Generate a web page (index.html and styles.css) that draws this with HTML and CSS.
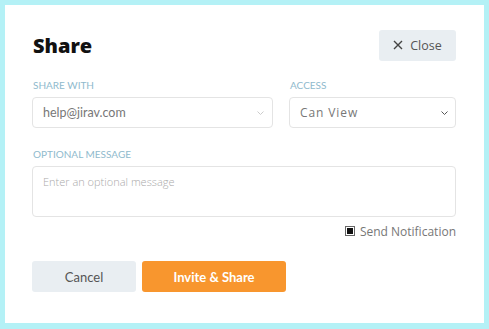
FILE: index.html
```html
<!DOCTYPE html>
<html lang="en">
<head>
    <meta charset="UTF-8">
    <title>Share</title>
    <link rel="stylesheet" href="styles.css">
</head>
<body>

<div class="modal">
    <div class="modal-header">
        <h2>Share</h2>
        <button type="button" class="btn-close">
            <svg width="10" height="10" viewBox="0 0 10 10"><path d="M1 1L9 9M9 1L1 9" stroke="#444" stroke-width="1.4" fill="none"/></svg>
            Close
        </button>
    </div>

    <div class="form-row">
        <div class="form-group group-email">
            <label>Share With</label>
            <div class="select select-email">
                <span>help@jirav.com</span>
                <svg width="7" height="4" viewBox="0 0 7 4"><path d="M0.5 0.5L3.5 3.5L6.5 0.5" stroke="#ccc" fill="none"/></svg>
            </div>
        </div>
        <div class="form-group group-access">
            <label>Access</label>
            <div class="select select-access">
                <span>Can View</span>
                <svg width="7" height="4" viewBox="0 0 7 4"><path d="M0.5 0.5L3.5 3.5L6.5 0.5" stroke="#555" fill="none"/></svg>
            </div>
        </div>
    </div>

    <div class="form-group group-message">
        <label>Optional Message</label>
        <div class="textarea">Enter an optional message</div>
    </div>

    <div class="notify">
        <span class="checkbox"></span>
        Send Notification
    </div>

    <div class="button-group">
        <button type="button" class="btn-cancel">Cancel</button>
        <button type="button" class="btn-invite">Invite &amp; Share</button>
    </div>
</div>

</body>
</html>
```

FILE: styles.css
```css
body {
    margin: 0;
    padding: 5px 5px 6px;
    background: #b4f1f6;
    font-family: 'Lato', 'Open Sans', sans-serif;
}
.modal {
    background: #fff;
    height: 318px;
    box-sizing: border-box;
    padding: 25px 28px 0 27px;
}
.modal-header {
    display: flex;
    justify-content: space-between;
    align-items: center;
    height: 31px;
}
h2 {
    margin: 0 0 0 1px;
    font-family: 'Open Sans', sans-serif;
    font-size: 20px;
    font-weight: 800;
    color: #111;
}
button {
    border: none;
    border-radius: 3px;
    cursor: pointer;
    height: 31px;
}
.btn-close {
    width: 77px;
    background: #e9eef2;
    color: #555;
    font-family: 'Open Sans', sans-serif;
    font-size: 12.5px;
    display: flex;
    align-items: center;
    justify-content: center;
    gap: 7px;
    padding: 0 0 1px;
}
.form-row {
    display: flex;
    gap: 16px;
    margin-top: 18px;
}
.group-email {
    width: 241px;
}
.group-access {
    flex: 1;
}
label {
    display: block;
    font-size: 10px;
    line-height: 12px;
    text-transform: uppercase;
    color: #8fbacd;
    margin: 0 0 6px 1px;
}
.select {
    height: 31px;
    box-sizing: border-box;
    border: 1px solid #e4e4e4;
    border-radius: 4px;
    display: flex;
    align-items: center;
    justify-content: space-between;
    padding: 0 7px 0 10px;
    color: #777;
}
.select-email span {
    font-size: 12.5px;
}
.select-email {
    padding-right: 8px;
}
.select-access span {
    font-family: 'Open Sans', sans-serif;
    font-size: 12px;
    letter-spacing: 0.9px;
}
.group-message {
    margin-top: 20px;
}
.textarea {
    height: 51px;
    box-sizing: border-box;
    border: 1px solid #e4e4e4;
    border-radius: 4px;
    padding: 7px 10px;
    font-family: 'Open Sans', sans-serif;
    font-size: 11px;
    font-weight: 300;
    color: #aaa;
}
.notify {
    display: flex;
    justify-content: flex-end;
    align-items: center;
    gap: 5px;
    margin-top: 7px;
    height: 14px;
    font-family: 'Open Sans', sans-serif;
    font-size: 12px;
    color: #777;
}
.checkbox {
    width: 6px;
    height: 6px;
    border: 1px solid #666;
    padding: 1px;
    background: #111;
    background-clip: content-box;
}
.button-group {
    display: flex;
    gap: 6px;
    margin-top: 23px;
}
.btn-cancel {
    width: 104px;
    background: #e9eef2;
    color: #555;
    font-family: 'Lato', sans-serif;
    font-size: 13px;
    font-weight: 400;
}
.btn-invite {
    width: 144px;
    background: #f8962e;
    color: #fff;
    font-family: 'Lato', sans-serif;
    font-size: 13px;
    font-weight: 700;
}
```
